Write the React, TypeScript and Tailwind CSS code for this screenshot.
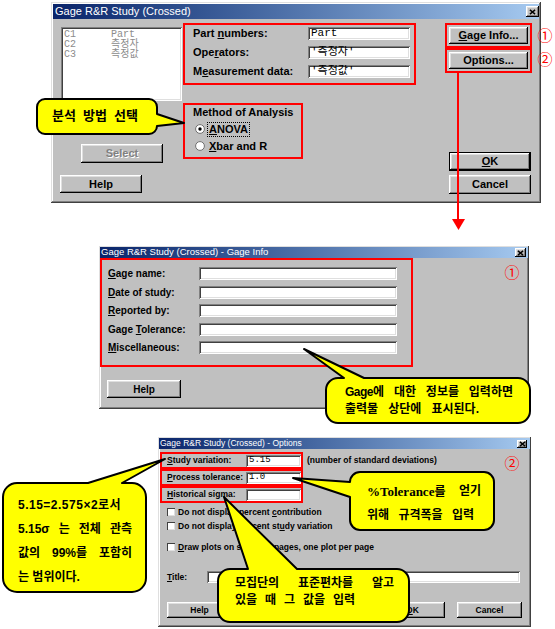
import type { ReactNode } from "react";

const SANS = "font-['Liberation_Sans','Noto_Sans_CJK_KR',sans-serif]";
const MONO = "font-['Liberation_Mono','Noto_Sans_CJK_KR',monospace]";
const RAISED =
  "shadow-[inset_-1px_-1px_0_#404040,inset_1px_1px_0_#dfdfdf,inset_-2px_-2px_0_#808080,inset_2px_2px_0_#ffffff]";
const BTN =
  "shadow-[inset_-1px_-1px_0_#000000,inset_1px_1px_0_#ffffff,inset_-2px_-2px_0_#808080,inset_2px_2px_0_#dfdfdf]";
const BTN_DEF =
  "shadow-[inset_0_0_0_1px_#000000,inset_-2px_-2px_0_#000000,inset_2px_2px_0_#ffffff,inset_-3px_-3px_0_#808080,inset_3px_3px_0_#dfdfdf]";
const SUNKEN =
  "shadow-[inset_1px_1px_0_#808080,inset_-1px_-1px_0_#ffffff,inset_2px_2px_0_#404040,inset_-2px_-2px_0_#dfdfdf]";

function U({ children }: { children: ReactNode }) {
  return <span className="underline underline-offset-[1px] decoration-1">{children}</span>;
}

function CloseBox({ size }: { size: string }) {
  return (
    <div className={`${size} bg-[#c0c0c0] ${BTN} flex items-center justify-center`}>
      <svg viewBox="0 0 8 7" className="w-[7px] h-[6px]">
        <path d="M1 1L7 6M7 1L1 6" stroke="#000" strokeWidth="1.6" />
      </svg>
    </div>
  );
}

function TitleBar({ title, cls, close }: { title: string; cls: string; close: string }) {
  return (
    <div
      className={`flex items-center justify-between shrink-0 bg-linear-to-r from-[#0a246a] to-[#a6caf0] text-white font-normal ${cls}`}
    >
      <span className="whitespace-nowrap">{title}</span>
      <CloseBox size={close} />
    </div>
  );
}

function Button({
  children,
  cls,
  disabled,
  isDefault,
}: {
  children: ReactNode;
  cls: string;
  disabled?: boolean;
  isDefault?: boolean;
}) {
  return (
    <div
      className={`flex items-center justify-center shrink-0 bg-[#c0c0c0] font-bold whitespace-nowrap ${
        isDefault ? BTN_DEF : BTN
      } ${disabled ? "text-[#808080] [text-shadow:1px_1px_0_#ffffff]" : "text-black"} ${cls}`}
    >
      {children}
    </div>
  );
}

function Field({ children, cls }: { children?: ReactNode; cls: string }) {
  return (
    <div
      className={`flex items-center shrink-0 bg-white pl-[3px] font-normal whitespace-nowrap overflow-hidden ${MONO} ${SUNKEN} ${cls}`}
    >
      {children}
    </div>
  );
}

function Radio({ on }: { on?: boolean }) {
  return (
    <svg width="10" height="10" viewBox="0 0 10 10" className="shrink-0">
      <circle cx="5" cy="5" r="4.4" fill="#fff" stroke="#707070" strokeWidth="1" />
      {on && <circle cx="5" cy="5" r="1.7" fill="#000" />}
    </svg>
  );
}

function Check() {
  return (
    <div className="w-[8px] h-[8px] shrink-0 bg-white shadow-[inset_1px_1px_0_#404040,inset_-1px_-1px_0_#dfdfdf]" />
  );
}

function Line({ words, cls }: { words: ReactNode[]; cls: string }) {
  return (
    <div className={`flex justify-between whitespace-nowrap ${cls}`}>
      {words.map((w, i) => (
        <span key={i}>{w}</span>
      ))}
    </div>
  );
}

function MainDialog() {
  const cols = [
    ["C1", "Part"],
    ["C2", "측정자"],
    ["C3", "측정값"],
  ];
  const vars: [ReactNode, string][] = [
    [<>Part <U>n</U>umbers:</>, "Part"],
    [<>Ope<U>r</U>ators:</>, "'측정자'"],
    [<>M<U>e</U>asurement data:</>, "'측정값'"],
  ];
  return (
    <div className={`ml-[51px] mt-[2px] w-[490px] h-[201px] shrink-0 bg-[#c0c0c0] p-[2px] flex flex-col ${RAISED}`}>
      <TitleBar title="Gage R&R Study (Crossed)" cls="h-[15px] text-[11px] pl-[2px]" close="w-[13px] h-[11px]" />
      <div className="flex pt-[4px]">
        <div className="ml-[8px] w-[122px] flex flex-col">
          <div
            className={`mt-[4px] w-[121px] h-[74px] bg-white pt-[3px] pl-[3px] text-[10px] leading-[10px] text-[#8c8c8c] ${MONO} ${SUNKEN}`}
          >
            {cols.map(([c, n]) => (
              <div key={c} className="flex h-[10px]">
                <span className="w-[47px]">{c}</span>
                <span>{n}</span>
              </div>
            ))}
          </div>
          <Button cls="mt-[43px] ml-[20px] w-[82px] h-[19px] text-[11px]" disabled>
            Select
          </Button>
          <Button cls="mt-[12px] -ml-[1px] w-[82px] h-[18px] text-[11px]">Help</Button>
        </div>

        <div className="w-[233px] flex flex-col text-[11px] font-bold">
          <div className="h-[62px] border-2 border-[#ff0000] pt-[2px] pl-[8px] pr-[4px] flex flex-col gap-[6px]">
            {vars.map(([label, value], i) => (
              <div key={i} className="h-[13px] leading-[13px] flex items-center justify-between">
                <span className="whitespace-nowrap">{label}</span>
                <Field cls="w-[102px] h-[13px] text-[11px]">{value}</Field>
              </div>
            ))}
          </div>
          <div className="mt-[18px] w-[120px] h-[56px] border-2 border-[#ff0000] pl-[8px]">
            <div className="leading-[14px] whitespace-nowrap">Method of Analysis</div>
            <div className="mt-[3px] h-[14px] flex items-center">
              <span className="ml-[2px] flex">
                <Radio on />
              </span>
              <span className="ml-[2px] border border-dotted border-black px-[1px] leading-[13px]">
                <U>A</U>NOVA
              </span>
            </div>
            <div className="mt-[3px] h-[14px] flex items-center">
              <span className="ml-[2px] flex">
                <Radio />
              </span>
              <span className="ml-[4px] whitespace-nowrap">
                <U>X</U>bar and R
              </span>
            </div>
          </div>
        </div>

        <div className="ml-[29px] w-[87px] flex flex-col text-[11px]">
          <div className="h-[25px] border-2 border-[#ff0000] p-[2px] flex">
            <Button cls="flex-1 h-full">
              <U>G</U>age Info...
            </Button>
          </div>
          <div className="h-[25px] border-2 border-[#ff0000] p-[2px] flex">
            <Button cls="flex-1 h-full">Options...</Button>
          </div>
          <Button cls="mt-[79px] ml-[4px] w-[82px] h-[19px]" isDefault>
            <U>O</U>K
          </Button>
          <Button cls="mt-[4px] ml-[4px] w-[82px] h-[19px]">Cancel</Button>
        </div>
      </div>
    </div>
  );
}

function GageInfoDialog() {
  const rows: ReactNode[] = [
    <><U>G</U>age name:</>,
    <><U>D</U>ate of study:</>,
    <><U>R</U>eported by:</>,
    <>Gage <U>T</U>olerance:</>,
    <><U>M</U>iscellaneous:</>,
  ];
  return (
    <div className={`ml-[99px] mt-[43px] w-[430px] h-[163px] shrink-0 bg-[#c0c0c0] p-[1px] flex flex-col ${RAISED}`}>
      <TitleBar
        title="Gage R&R Study (Crossed) - Gage Info"
        cls="h-[11px] text-[9.5px] pl-[1px] pr-[2px]"
        close="w-[11px] h-[9px]"
      />
      <div className="w-[313px] h-[109px] border-2 border-[#ff0000] pt-[7px] pl-[6px] flex flex-col gap-[5.5px] text-[10px] font-bold">
        {rows.map((label, i) => (
          <div key={i} className="h-[13px] leading-[13px] flex items-center">
            <span className="w-[91px] whitespace-nowrap">{label}</span>
            <Field cls="w-[198px] h-[13px]" />
          </div>
        ))}
      </div>
      <Button cls="mt-[13px] ml-[7px] w-[74px] h-[18px] text-[10px]">Help</Button>
    </div>
  );
}

function OptBox({ label, value }: { label: ReactNode; value?: string }) {
  return (
    <div className="ml-[1px] w-[143px] h-[17px] shrink-0 border-2 border-[#ff0000] pl-[5px] flex items-center justify-between">
      <span className="whitespace-nowrap">{label}</span>
      <Field cls="w-[55px] h-[12px] text-[9px]">{value}</Field>
    </div>
  );
}

function OptionsDialog() {
  return (
    <div
      className={`ml-[158px] mt-[28px] w-[373px] h-[190px] shrink-0 bg-[#c0c0c0] p-[1px] flex flex-col text-[8.5px] font-bold ${RAISED}`}
    >
      <TitleBar
        title="Gage R&R Study (Crossed) - Options"
        cls="h-[11px] text-[8.5px] pl-[1px] pr-[3px]"
        close="w-[10px] h-[8px]"
      />
      <div className="mt-[3px] flex items-center">
        <OptBox label={<><U>S</U>tudy variation:</>} value="5.15" />
        <span className="ml-[4px] whitespace-nowrap">(number of standard deviations)</span>
      </div>
      <OptBox label={<><U>P</U>rocess tolerance:</>} value="1.0" />
      <OptBox label={<><U>H</U>istorical sigma:</>} />

      <div className="mt-[3px] ml-[8px] h-[12px] flex items-center gap-[3px] whitespace-nowrap">
        <Check />
        <span>
          Do not display percent <U>c</U>ontribution
        </span>
      </div>
      <div className="mt-[2px] ml-[8px] h-[12px] flex items-center gap-[3px] whitespace-nowrap">
        <Check />
        <span>
          Do not display percent st<U>u</U>dy variation
        </span>
      </div>
      <div className="mt-[9px] ml-[8px] h-[12px] flex items-center gap-[3px] whitespace-nowrap">
        <Check />
        <span>
          <U>D</U>raw plots on separate pages, one plot per page
        </span>
      </div>
      <div className="mt-[18px] ml-[8px] h-[12px] flex items-center">
        <span className="w-[40px]">
          <U>T</U>itle:
        </span>
        <Field cls="w-[313px] h-[12px]" />
      </div>
      <div className="mt-[19px] ml-[8px] flex">
        <Button cls="w-[65px] h-[16px]">Help</Button>
        <Button cls="ml-[148px] w-[65px] h-[16px]">
          <U>O</U>K
        </Button>
        <Button cls="ml-[12px] w-[65px] h-[16px]">Cancel</Button>
      </div>
    </div>
  );
}

function Annotations() {
  const bubble = { fill: "#ffff00", stroke: "#000", strokeWidth: 2, strokeLinejoin: "round" as const };
  return (
    <>
      <svg className="absolute left-0 top-0 w-[555px] h-[629px] pointer-events-none" viewBox="0 0 555 629">
        <line x1="458" y1="73" x2="458" y2="221" stroke="#ff0000" strokeWidth="2" />
        <polygon points="452,219 465,219 458.5,230" fill="#ff0000" />
        <path
          {...bubble}
          d="M45 99H149A8 8 0 0 1 157 107V114L184 123L157 126A8 8 0 0 1 149 134H45A8 8 0 0 1 37 126V107A8 8 0 0 1 45 99Z"
        />
        <path
          {...bubble}
          d="M338 378H344L304 349L364 378H518A12 12 0 0 1 530 390V411A12 12 0 0 1 518 423H338A12 12 0 0 1 326 411V390A12 12 0 0 1 338 378Z"
        />
        <path
          {...bubble}
          d="M17 483H88L165 459L122 483H132A14 14 0 0 1 146 497V578A14 14 0 0 1 132 592H17A14 14 0 0 1 3 578V497A14 14 0 0 1 17 483Z"
        />
        <path
          {...bubble}
          d="M360 472H484A10 10 0 0 1 494 482V520A10 10 0 0 1 484 530H360A10 10 0 0 1 350 520V497L293 478L350 482A10 10 0 0 1 360 472Z"
        />
        <path
          {...bubble}
          d="M230 569H248L224 497L297 569H397A12 12 0 0 1 409 581V610A12 12 0 0 1 397 622H230A12 12 0 0 1 218 610V581A12 12 0 0 1 230 569Z"
        />
      </svg>

      <div className="absolute left-[537px] top-[28px] w-[16px] h-[16px] flex items-center justify-center text-[15px] leading-[16px] text-[#ff0000]">
        ①
      </div>
      <div className="absolute left-[537px] top-[52px] w-[16px] h-[16px] flex items-center justify-center text-[15px] leading-[16px] text-[#ff0000]">
        ②
      </div>
      <div className="absolute left-[504px] top-[265px] w-[16px] h-[16px] flex items-center justify-center text-[15px] leading-[16px] text-[#ff0000]">
        ①
      </div>
      <div className="absolute left-[504px] top-[456px] w-[16px] h-[16px] flex items-center justify-center text-[15px] leading-[16px] text-[#ff0000]">
        ②
      </div>

      <div className="absolute left-[52px] top-[107px] text-[13px] leading-[18px] font-bold">
        <Line cls="w-[86px]" words={["분석", "방법", "선택"]} />
      </div>

      <div className="absolute left-[345px] top-[384px] text-[12px] leading-[17px] font-bold">
        <Line
          cls="w-[168px]"
          words={[
            <>
              <span className="tracking-[-0.5px]">Gage</span>에
            </>,
            "대한",
            "정보를",
            "입력하면",
          ]}
        />
        <Line cls="w-[134px]" words={["출력물", "상단에", "표시된다."]} />
      </div>

      <div className="absolute left-[18px] top-[493px] text-[12px] leading-[24px] font-bold">
        <div className="whitespace-nowrap tracking-[0.5px]">5.15=2.575×2로서</div>
        <Line cls="w-[114px]" words={["5.15σ", "는", "전체", "관측"]} />
        <Line cls="w-[114px]" words={["값의", "99%를", "포함히"]} />
        <div className="whitespace-nowrap">는 범위이다.</div>
      </div>

      <div className="absolute left-[367px] top-[480px] text-[12px] leading-[23px] font-bold">
        <Line
          cls="w-[114px]"
          words={[
            <>
              <span className="font-['Liberation_Serif',serif] text-[13px]">%Tolerance</span>를
            </>,
            "얻기",
          ]}
        />
        <Line cls="w-[107px]" words={["위해", "규격폭을", "입력"]} />
      </div>

      <div className="absolute left-[235px] top-[575px] text-[12px] leading-[17px] font-bold">
        <Line cls="w-[159px]" words={["모집단의", "표준편차를", "알고"]} />
        <Line cls="w-[120px]" words={["있을", "때", "그", "값을", "입력"]} />
      </div>
    </>
  );
}

export default function App() {
  return (
    <div className={`relative w-[555px] h-[629px] overflow-hidden bg-white text-black flex flex-col ${SANS}`}>
      <MainDialog />
      <GageInfoDialog />
      <OptionsDialog />
      <Annotations />
    </div>
  );
}
